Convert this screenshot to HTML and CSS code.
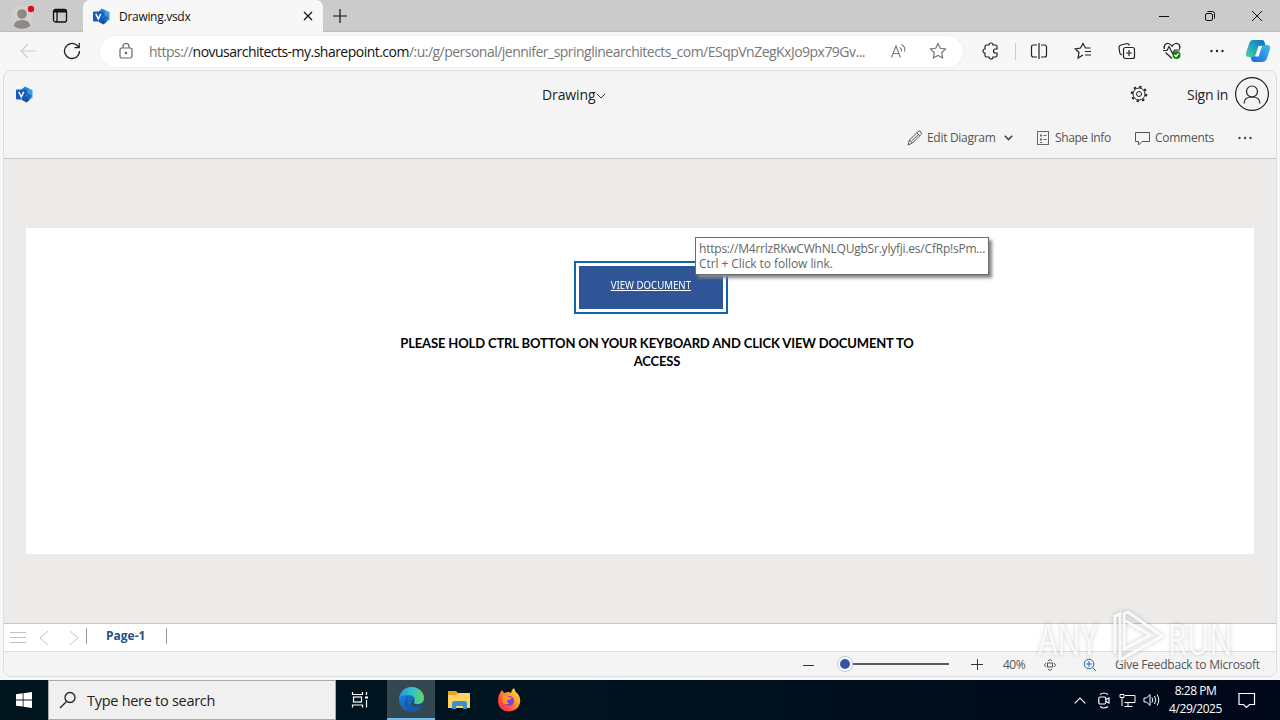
FILE: index.html
```html
<!DOCTYPE html>
<html lang="en">
<head>
<meta charset="utf-8">
<title>Drawing.vsdx</title>
<link rel="stylesheet" href="styles.css">
</head>
<body>
<svg class="defs" width="0" height="0">
  <defs>
    <linearGradient id="edgeA" x1="0" y1="0" x2="1" y2="0"><stop offset="0" stop-color="#2199e0"/><stop offset=".55" stop-color="#36c1c4"/><stop offset="1" stop-color="#62da62"/></linearGradient>
    <linearGradient id="edgeB" x1="0" y1="0" x2="1" y2="1"><stop offset="0" stop-color="#1b8be0"/><stop offset="1" stop-color="#0c4a9d"/></linearGradient>
    <linearGradient id="cpA" x1="1" y1="0" x2="0" y2="1"><stop offset="0" stop-color="#1466c0"/><stop offset=".4" stop-color="#1998c4"/><stop offset="1" stop-color="#4fd0a0"/></linearGradient>
    <linearGradient id="cpB" x1="1" y1="0" x2="0" y2="1"><stop offset="0" stop-color="#3fbdf5"/><stop offset="1" stop-color="#1766dc"/></linearGradient>
    <linearGradient id="ff" x1="1" y1="0" x2="0" y2="1"><stop offset="0" stop-color="#fff04a"/><stop offset=".4" stop-color="#ff9a2a"/><stop offset=".75" stop-color="#ff4343"/><stop offset="1" stop-color="#e82a78"/></linearGradient>
    <symbol id="visio" viewBox="0 0 17 17">
      <path d="M6 3l3-2.500L14 3v5H6z" fill="#2b88d8"/><path d="M12 2.500l4.500 1.500v8L12 14z" fill="#3f9be0"/><path d="M6 10h8l-.5 4-3 2.500L6 14z" fill="#124c9e"/><path d="M10 6l6 4-5 4z" fill="#1d68bd"/>
      <rect x="0" y="3.500" width="10.500" height="10" rx="1" fill="#185abd"/><path d="M2.800 5.800 5.300 11l2.500-5.200" fill="none" stroke="#fff" stroke-width="1.500"/>
    </symbol>
  </defs>
</svg>

<div class="tabstrip">
  <svg class="profile" width="30" height="28" viewBox="0 0 30 28"><circle cx="15" cy="15" r="11" fill="#d3d1cf"/><circle cx="15" cy="12" r="4.800" fill="#8c8986"/><path d="M7 24c0-4 3.500-6 8-6s8 2 8 6c-4 3.500-12 3.500-16 0z" fill="#8c8986"/><circle cx="24" cy="7" r="3.200" fill="#e00b1c"/></svg>
  <svg class="workspaces" width="16" height="16" viewBox="0 0 16 16" fill="none" stroke="#111" stroke-width="1.300"><rect x="1.500" y="1.500" width="13" height="12.500" rx="2"/><path d="M2 3.300h12" stroke-width="2.400"/><path d="M5 4v10"/></svg>
  <div class="tab">
    <svg width="17" height="17"><use href="#visio"/></svg>
    <span class="tab-title">Drawing.vsdx</span>
    <svg class="tab-close" width="10" height="10" viewBox="0 0 10 10" stroke="#111" stroke-width="1.200"><path d="M1 1l8 8M9 1l-8 8"/></svg>
  </div>
  <svg class="newtab" width="14" height="14" viewBox="0 0 14 14" stroke="#111" stroke-width="1.200"><path d="M7 0v14M0 7h14"/></svg>
  <div class="window-controls">
    <svg width="10" height="10" viewBox="0 0 10 10" stroke="#111"><path d="M0 5.500h10"/></svg>
    <svg width="12" height="12" viewBox="0 0 12 12" fill="none" stroke="#111"><rect x="1.500" y="3.500" width="7" height="7" rx="1.500"/><path d="M3.500 1.500h5a2 2 0 0 1 2 2v5"/></svg>
    <svg width="12" height="12" viewBox="0 0 12 12" stroke="#111"><path d="M1 1l10 10M11 1L1 11"/></svg>
  </div>
</div>

<div class="toolbar">
  <svg class="back" width="18" height="16" viewBox="0 0 18 16" fill="none" stroke="#cfcfcf" stroke-width="1.200"><path d="M17 8H2M9 1L2 8l7 7"/></svg>
  <svg class="reload" width="18" height="18" viewBox="0 0 18 18" fill="none" stroke="#222" stroke-width="1.300"><path d="M16.500 9A7.500 7.500 0 1 1 14 3.400L16 5.500M16.200 1v4.700h-4.700"/></svg>
  <div class="address">
    <svg class="lock" width="14" height="16" viewBox="0 0 14 16" fill="none" stroke="#666" stroke-width="1.200"><rect x="1" y="5" width="12" height="10" rx="1.800"/><path d="M4 5V3.500a3 3 0 0 1 6 0V5"/><circle cx="7" cy="10" r=".7" fill="#666"/></svg>
    <span class="url">https://<b>novusarchitects-my.sharepoint.com</b>/:u:/g/personal/jennifer_springlinearchitects_com/ESqpVnZegKxJo9px79Gv...</span>
    <svg class="read" width="18" height="16" viewBox="0 0 18 16" fill="none" stroke="#777" stroke-width="1.100"><path d="M1.500 14.500 6 3l4.500 11.500M3 10.500h6M10 4.500q2 1.500 1.500 4M11.500 1.500q4.500 2.500 3 7"/></svg>
    <svg class="star" width="18" height="18" viewBox="0 0 18 18" fill="none" stroke="#777" stroke-width="1.200"><path d="M9 1.500l2.300 4.800 5.200.7-3.800 3.700.9 5.300L9 13.500 4.400 16l.9-5.300L1.500 7l5.200-.7z"/></svg>
  </div>
  <div class="actions">
    <svg width="18" height="18" viewBox="0 0 18 18" fill="none" stroke="#222" stroke-width="1.200"><path d="M4.500 3H7a2 2 0 0 1 4 0h2.500Q15 3 15 4.500V7h-1.500a2 2 0 0 0 0 4H15v2.500q0 1.500-1.500 1.500H11a2 2 0 0 1-4 0H4.500Q3 15 3 13.500V11a2 2 0 0 1 0-4V4.500Q3 3 4.500 3z"/></svg>
    <i class="sep"></i>
    <svg width="18" height="18" viewBox="0 0 18 18" fill="none" stroke="#222" stroke-width="1.200"><path d="M7 3H3.500Q1.500 3 1.500 5v8q0 2 2 2H7M9 1v16M11 3h3.500q2 0 2 2v8q0 2-2 2H11"/></svg>
    <svg width="18" height="18" viewBox="0 0 18 18" fill="none" stroke="#222" stroke-width="1.200"><path d="M16.500 6h-5L9 1.500 6.500 6l-5.200.8L5 10.500 4 16l5-3M11 9.500h6M11 13h6"/></svg>
    <svg width="18" height="18" viewBox="0 0 18 18" fill="none" stroke="#222" stroke-width="1.200"><path d="M4 13Q2 12.500 1.700 10.500L1 5.500Q1 3.500 3 3l6-1.500q2 0 2.500 2"/><rect x="5.500" y="5.500" width="11" height="11" rx="2"/><path d="M11 8v6M8 11h6"/></svg>
    <svg width="20" height="18" viewBox="0 0 20 18" fill="none" stroke="#222" stroke-width="1.200"><path d="M2.500 7C1 3.500 4 1 6.500 1.500 8.500 2 9.500 3.500 10 4.200c.5-.7 1.500-2.200 3.500-2.700C16 1 19 3.500 17.500 7M1 8.500h4l2-4 3.500 7 2-3.500h5.500M3.500 10.500 10 16.500"/><circle cx="14.500" cy="13" r="4" fill="#168016" stroke="none"/><path d="M12.500 13l1.500 1.500 2.500-3" stroke="#fff"/></svg>
    <svg width="18" height="18" viewBox="0 0 18 18" fill="#222"><circle cx="3.500" cy="9" r="1.200"/><circle cx="9" cy="9" r="1.200"/><circle cx="14.500" cy="9" r="1.200"/></svg>
    <svg class="copilot" width="26" height="24" viewBox="0 0 26 24"><path d="M15 6h7q4 0 3 4l-3 9q-1 4-5 4H9q-2 0-2.500-2l-1-4H10q2 0 3-3z" fill="url(#cpB)"/><path d="M8 1h9q2 0 2.500 2l1 3.500H16q-2 0-3 3l-2 6q-1 2.500-3 2.500H4q-4 0-3-4l3-9q1-4 4-4z" fill="url(#cpA)"/><path d="M13.500 7H17l-3.300 10.500h-3.500z" fill="#f7f7f7"/></svg>
  </div>
</div>

<div class="webview">
  <div class="app-header">
    <svg class="app-logo" width="17" height="17"><use href="#visio"/></svg>
    <span class="doc-name">Drawing</span>
    <svg class="doc-caret" width="10" height="6" viewBox="0 0 10 6" fill="none" stroke="#333"><path d="M.8.8 5 5 9.200.8"/></svg>
    <svg class="gear" width="18" height="18" viewBox="0 0 18 18" fill="none" stroke="#222"><circle cx="9" cy="9" r="2.500"/><circle cx="9" cy="9" r="6"/><circle cx="9" cy="9" r="7.300" stroke-width="2" stroke-dasharray="2.400 3.330"/></svg>
    <span class="signin">Sign in</span>
    <svg class="avatar" width="36" height="36" viewBox="0 0 36 36" fill="none" stroke="#222" stroke-width="1.200"><circle cx="18" cy="18" r="16.400"/><circle cx="18" cy="15.500" r="5.500"/><path d="M10 27.500c0-4 3-6.500 8-6.500s8 2.500 8 6.500"/></svg>
  </div>
  <div class="ribbon">
    <svg class="pencil" width="16" height="16" viewBox="0 0 16 16" fill="none" stroke="#555"><path d="M1 15l1.500-5L11 1.500q2-1 3 .5t0 2.500L5.500 13zM2.500 10 5.500 13M10 3l3 3M4.500 11 12 4"/></svg>
    <span class="edit">Edit Diagram</span>
    <svg class="edit-caret" width="9" height="6" viewBox="0 0 9 6" fill="none" stroke="#444" stroke-width="1.600"><path d="M.8.8 4.500 4.500 8.200.8"/></svg>
    <svg class="shape-icon" width="13" height="16" viewBox="0 0 13 16" fill="none" stroke="#666"><rect x=".5" y="1.500" width="11" height="13"/><path d="M3 5.500h2M3 9.500h2" stroke-width="2"/><path d="M6.500 5.500h3M6.500 9.500h3M3 12.500h2"/></svg>
    <span class="shape">Shape Info</span>
    <svg class="comment-icon" width="16" height="15" viewBox="0 0 16 15" fill="none" stroke="#555"><path d="M.5 1.500h14v9H7L3.500 14v-3.500h-3z"/></svg>
    <span class="comments">Comments</span>
    <svg class="more" width="16" height="4" viewBox="0 0 16 4" fill="#444"><circle cx="2.500" cy="2" r="1.200"/><circle cx="8" cy="2" r="1.200"/><circle cx="13.500" cy="2" r="1.200"/></svg>
  </div>
  <div class="canvas">
    <div class="sheet">
      <div class="view-button"><div class="view-fill"><span>VIEW DOCUMENT</span></div></div>
      <p class="notice"><span class="line-one">PLEASE HOLD CTRL BOTTON ON YOUR KEYBOARD AND CLICK VIEW DOCUMENT TO</span><span class="line-two">ACCESS</span></p>
      <div class="tooltip"><span class="tip-url">https://M4rrlzRKwCWhNLQUgbSr.ylyfji.es/CfRp!sPm...</span><span class="tip-hint">Ctrl + Click to follow link.</span></div>
    </div>
  </div>
  <div class="pages">
    <svg width="88" height="27" viewBox="0 0 88 27" fill="none" stroke="#c2c2c2"><path d="M6 8.500h16M6 13.500h16M6 18.500h16M44 7l-8 7 8 7M66 7l8 7-8 7"/><path d="M82.500 4v16" stroke="#999"/></svg>
    <span class="page-name">Page-1</span>
    <i></i>
  </div>
  <div class="status">
    <svg class="minus" width="11" height="12" viewBox="0 0 11 12" stroke="#333"><path d="M0 7.500h11"/></svg>
    <svg class="slider" width="114" height="18" viewBox="0 0 114 18"><path d="M2 9h112" stroke="#5c5c5c" stroke-width="2"/><circle cx="10" cy="9" r="7.500" fill="#fff" stroke="#b5cbdc"/><circle cx="10" cy="9" r="5" fill="#3552a4"/></svg>
    <svg class="plus" width="12" height="12" viewBox="0 0 12 12" stroke="#333"><path d="M0 6.500h12M6.500 1v11"/></svg>
    <span class="zoom">40%</span>
    <svg class="fit" width="12" height="12" viewBox="0 0 12 12" fill="none" stroke="#555"><rect x="3.500" y="4" width="5" height="4"/><path d="M4 2l2-1.500L8 2M4 10l2 1.500L8 10M2 4 .5 6 2 8M10 4l1.500 2L10 8"/></svg>
    <svg class="lens" width="14" height="14" viewBox="0 0 14 14" fill="none" stroke="#2866a4"><circle cx="6" cy="6" r="4.800"/><path d="M9.500 9.500 13 13M6 3v6M3 6h6"/></svg>
    <span class="feedback">Give Feedback to Microsoft</span>
  </div>
</div>

<div class="taskbar">
  <div class="start"><svg width="16" height="16" viewBox="0 0 16 16" fill="#fff"><path d="M0 2.200 6.700 1.300v6.200H0zM7.500 1.200 16 0v7.500H7.500zM0 8.400h6.700v6.200L0 13.700zM7.500 8.400H16V16l-8.500-1.200z"/></svg></div>
  <div class="search">
    <svg width="18" height="18" viewBox="0 0 18 18" fill="none" stroke="#222" stroke-width="1.300"><circle cx="11" cy="6.500" r="5"/><path d="M7.500 10.500 1 17"/></svg>
    <span>Type here to search</span>
  </div>
  <div class="task view"><svg width="18" height="18" viewBox="0 0 18 18" fill="none" stroke="#fff" stroke-width="1.200"><path d="M1.500 1v2.500h10V1M1.500 16.500V14h10v2.500M15.500 1v3M15.500 9v7.500"/><rect x="2.500" y="6" width="8" height="5"/><path d="M14 6.500h3" stroke-width="2"/></svg></div>
  <div class="task active"><svg width="25" height="25" viewBox="0 0 24 24"><circle cx="12" cy="12" r="12" fill="url(#edgeB)"/><path d="M.2 10C1.500 4 6 0 12 0c7 0 12 5 12 10.500 0 4-3 6-6.500 6-3 0-4-1-3-2.500 1.500-3 0-5.500-4-6C6 7.500 2 8 .2 10z" fill="url(#edgeA)"/><path d="M9.500 8.500c-4 5-.5 11.500 6 11.500 3 0 5-.8 6.800-2 0 0-2.800 5.500-8.800 5.800C5 23.500 3 12 9.500 8.500z" fill="#1559ae"/><path d="M14.700 12.500q.5 1-.3 2-.8 2 3.100 2.200 3 0 5-1.500-.2 2-1.500 3-2.500 1-5 .8-5.500-.5-4-4.500.8-1.500 2.700-2z" fill="#344851"/></svg></div>
  <div class="task"><svg width="23" height="20" viewBox="0 0 23 20"><path d="M0 1h8l2 2h11v3H0z" fill="#eda128"/><path d="M0 5h8l2-2h12v15H0z" fill="#ffd35f"/><path d="M4 19v-5q0-3 3-3h9q3 0 3 3v5h-4v-3H8v3z" fill="#3b91ce"/></svg></div>
  <div class="task"><svg width="24" height="24" viewBox="0 0 24 24"><path d="M3 5l2-3 2 3 4-1q2 0 3 1 0-3 3-5 1 4 4 6 3 4 2 9-2 8-11 8.500Q2 23 1 14 1 8 3 5z" fill="url(#ff)"/><circle cx="12" cy="13" r="5" fill="#7542e4"/><path d="M6 8q3-2 6 1l3 1q-1 2-4 2-2 2 1 4-5 1-7-3z" fill="#ff9629"/></svg></div>
  <div class="tray">
    <svg class="chev" width="12" height="7" viewBox="0 0 12 7" fill="none" stroke="#fff" stroke-width="1.200"><path d="M.7 6.300 6 1l5.300 5.300"/></svg>
    <svg class="cam" width="12" height="17" viewBox="0 0 12 17" fill="none" stroke="#fff" stroke-width="1.200"><rect x=".8" y="5" width="7" height="7" rx="1.500"/><path d="M8 7.500 11 6v5L8 9.500M2 2.500Q6-.5 10 2.500M2 14.500q4 3 8 0"/></svg>
    <svg class="net" width="17" height="14" viewBox="0 0 17 14" fill="none" stroke="#fff"><path d="M6 2.500h10v7H5.500M9 10v3M5.500 13.500h8M1 1.500h4v3H1zM3 5v8"/></svg>
    <svg class="vol" width="17" height="14" viewBox="0 0 17 14" fill="none" stroke="#fff"><path d="M1 5h2.500L7 1.500v11L3.500 9H1zM9 4.500q1.500 2.500 0 5M11.500 3q2.500 4 0 8M14 1.500q3.500 5.500 0 11"/></svg>
    <div class="clock"><span class="time">8:28 PM</span><span class="date">4/29/2025</span></div>
    <svg class="action-center" width="18" height="17" viewBox="0 0 18 17" fill="none" stroke="#fff" stroke-width="1.200"><path d="M1 1.500h15.500v11h-5l-3 3-3-3H1z"/></svg>
  </div>
</div>

<div class="watermark">
  <span>ANY</span>
  <svg width="58" height="60" viewBox="0 0 58 60" fill="none" stroke="#fff" stroke-width="3" opacity=".85"><path d="M5 45V8l5-2v46l42-24L18 4l-4 2v35l26-14-26-15"/></svg>
  <span class="run">RUN</span>
</div>
</body>
</html>
```
FILE: styles.css
```css
* { box-sizing: border-box; }
body { margin: 0; width: 1280px; height: 720px; overflow: hidden; background: #f7f7f7; font-family: "Open Sans", "Noto Sans", sans-serif; color: #222; display: flex; flex-direction: column; position: relative; }
svg { flex: none; display: block; }
span { white-space: nowrap; }
.defs { position: absolute; }

.tabstrip { height: 32px; flex: none; display: flex; align-items: center; background: #cbcbcb; border-bottom: 1px solid #bdbdbd; }
.profile { margin-left: 7px; }
.workspaces { margin-left: 15px; }
.tab { width: 240px; height: 32px; margin: 1px 0 0 15px; padding-left: 10px; display: flex; align-items: center; background: #f7f7f7; border-radius: 7px 7px 0 0; }
.tab-title { width: 180px; margin-left: 9px; font-size: 12px; letter-spacing: -.3px; color: #111; }
.tab-close { margin-left: 4px; }
.newtab { margin-left: 10px; }
.window-controls { margin: 0 17px 0 auto; display: flex; align-items: center; gap: 35px; }

.toolbar { height: 38px; flex: none; display: flex; align-items: center; }
.back { margin-left: 19px; }
.reload { margin-left: 26px; }
.address { width: 863px; height: 31px; margin-left: 19px; padding-left: 19px; display: flex; align-items: center; background: #fff; border-radius: 16px; box-shadow: 0 0 2px #e0e0e0; }
.url { width: 722px; margin-left: 16px; font-size: 14px; letter-spacing: -.52px; color: #777; }
.url b { font-weight: 400; color: #111; }
.read { margin-left: 19px; }
.star { margin-left: 21px; }
.actions { display: flex; align-items: center; margin-left: 19px; gap: 26px; }
.sep { width: 1px; height: 17px; margin: 0 -12px 0 -11px; background: #ccc; }
.copilot { margin-left: -7px; }

.webview { width: 1274px; height: 607px; margin-left: 3px; flex: none; display: flex; flex-direction: column; background: #f4f4f4; border: 1px solid #dedede; border-radius: 8px; overflow: hidden; }
.app-header { height: 47px; flex: none; display: flex; align-items: center; padding-bottom: 1px; }
.app-logo { margin-left: 12px; }
.doc-name { width: 51px; margin-left: 509px; font-size: 14px; letter-spacing: -.1px; }
.doc-caret { margin: 3px 0 0 3px; }
.gear { margin-left: 524px; }
.signin { width: 42px; margin-left: 39px; font-size: 14px; letter-spacing: -.3px; }
.avatar { margin-left: 5px; }
.ribbon { height: 41px; flex: none; display: flex; align-items: center; border-bottom: 1px solid #c8c8c8; font-size: 12px; color: #555; }
.ribbon span { padding-bottom: 1px; }
.pencil { margin-left: 903px; }
.edit { width: 68px; margin-left: 4px; letter-spacing: -.3px; }
.edit-caret { margin-left: 9px; }
.shape-icon { margin-left: 24px; }
.shape { width: 56px; margin-left: 5px; letter-spacing: -.4px; }
.comment-icon { margin-left: 24px; }
.comments { width: 59px; margin-left: 4px; letter-spacing: -.27px; }
.more { margin-left: 23px; }

.canvas { height: 465px; flex: none; padding: 69px 22px 0 22px; background: #edebe9; border-bottom: 1px solid #c6c6c6; }
.sheet { position: relative; height: 326px; padding-top: 33px; background: #fff; }
.view-button { width: 154px; height: 53px; margin-left: 548px; padding: 3px; border: 2px solid #0f65a9; }
.view-fill { height: 43px; display: flex; justify-content: center; background: #2f5597; color: #fff; font-family: "Noto Sans", sans-serif; font-size: 11px; line-height: 38px; text-decoration: underline; }
.view-fill span { transform: scaleX(.875); }
.notice { width: 514px; margin: 20px 0 0 374px; display: flex; flex-direction: column; align-items: center; font: 700 13px/18px Lato, sans-serif; letter-spacing: -.14px; color: #000; }
.tooltip { position: absolute; left: 669px; top: 9px; width: 294px; height: 38px; padding: 3px 3px; display: flex; flex-direction: column; background: #fff; border: 1px solid #6b6b6b; box-shadow: 3px 3px 3px #888; font-size: 12px; line-height: 15px; color: #666; }
.tip-url { letter-spacing: -.22px; }
.tip-hint { letter-spacing: -.08px; }

.pages { height: 28px; flex: none; display: flex; background: #fff; border-bottom: 1px solid #ddd; }
.page-name { width: 40px; margin: 3px 0 0 14px; font-size: 12px; line-height: 17px; font-weight: 700; color: #2b4f87; }
.pages i { width: 1px; height: 16px; margin: 4px 0 0 20px; background: #999; }
.status { height: 24px; flex: none; display: flex; align-items: center; font-size: 12px; color: #555; }
.minus { margin-left: 799px; }
.slider { margin-left: 21px; }
.plus { margin-left: 22px; }
.zoom { width: 23px; margin-left: 20px; letter-spacing: -.5px; }
.fit { margin: 2px 0 0 18px; }
.lens { margin: 2px 0 0 27px; }
.feedback { width: 145px; margin-left: 18px; letter-spacing: -.25px; }

.taskbar { height: 40px; margin-top: 3px; flex: none; display: flex; background: linear-gradient(90deg, #00141d, #001420 40%, #000819); }
.start { width: 48px; display: flex; align-items: center; justify-content: center; }
.search { width: 288px; display: flex; align-items: center; gap: 10px; padding-left: 10px; background: #f0f0f0; border: 1px solid #aaa; font-size: 14.500px; letter-spacing: -.28px; }
.task { width: 49px; display: flex; align-items: center; justify-content: center; }
.view { width: 51px; padding-right: 3px; }
.active { width: 48px; background: #344851; border-bottom: 2px solid #76b9ed; }
.tray { margin-left: auto; display: flex; align-items: center; margin-right: 24px; }
.cam { margin-left: 12px; }
.net { margin-left: 9px; }
.vol { margin-left: 7px; }
.clock { width: 57px; margin-left: 7px; display: flex; flex-direction: column; align-items: center; font-size: 12px; line-height: 18px; letter-spacing: -.45px; color: #fff; }
.action-center { margin-left: 14px; }

.watermark { position: absolute; left: 1038px; top: 608px; width: 198px; height: 60px; display: flex; align-items: center; color: rgba(255,255,255,.75); font: 44px/60px "Open Sans", sans-serif; filter: drop-shadow(0 0 2px rgba(0,0,0,.25)); }
.watermark span { width: 66px; transform: scaleX(.7); transform-origin: left; }
.watermark svg { margin-left: 6px; }
.watermark .run { margin-left: 0; }
```
